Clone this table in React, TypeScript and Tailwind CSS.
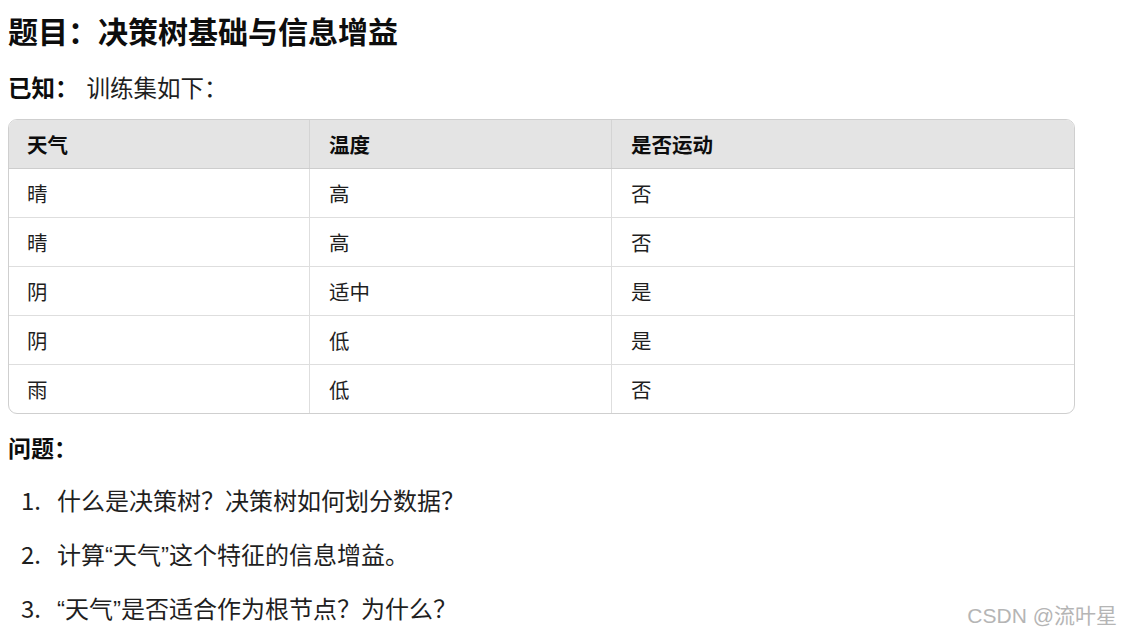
const rows = [
  ["晴", "高", "否"],
  ["晴", "高", "否"],
  ["阴", "适中", "是"],
  ["阴", "低", "是"],
  ["雨", "低", "否"],
];

// narrow latin quotes, like the reference font renders them
const Q = ({ c }: { c: string }) => (
  <span style={{ fontFamily: '"Liberation Sans", sans-serif' }}>{c}</span>
);

const questions = [
  <>什么是决策树？决策树如何划分数据？</>,
  <>
    计算<Q c="“" />天气<Q c="”" />这个特征的信息增益。
  </>,
  <>
    <Q c="“" />天气<Q c="”" />是否适合作为根节点？为什么？
  </>,
];

const App = () => {
  return (
    <div
      className="relative w-[1122px] h-[636px] overflow-hidden bg-white text-[#1f1f1f]"
      style={{ fontFamily: '"Noto Sans CJK SC", "Noto Sans", sans-serif' }}
    >
      <div className="pl-[8px] pr-[47px]">
        <h1 className="mt-[8px] h-[44px] leading-[44px] text-[30px] font-bold text-[#0d0d0d]">
          题目：决策树基础与信息增益
        </h1>

        <p className="mt-[18px] h-[34px] leading-[34px] text-[23.5px]">
          <span className="font-bold text-[#0d0d0d]">已知：</span>
          <span className="ml-[8px]">训练集如下：</span>
        </p>

        {/* table */}
        <div className="mt-[15px] w-[1067px] border border-[#cfcfcf] rounded-[9px] overflow-hidden text-[20.5px]">
          <div className="grid grid-cols-[300px_302px_1fr] h-[49px] bg-[#e4e4e4] border-b border-[#cdcdcd] font-bold text-[#0d0d0d]">
            <div className="flex items-center pl-[18px]">天气</div>
            <div className="flex items-center pl-[19px] border-l border-[#d4d4d4]">温度</div>
            <div className="flex items-center pl-[19px] border-l border-[#d4d4d4]">是否运动</div>
          </div>
          {rows.map((r, i) => (
            <div
              key={i}
              className={
                i < rows.length - 1
                  ? "grid grid-cols-[300px_302px_1fr] h-[49px] border-b border-[#dedede]"
                  : "grid grid-cols-[300px_302px_1fr] h-[48px]"
              }
            >
              <div className="flex items-center pl-[18px]">{r[0]}</div>
              <div className="flex items-center pl-[19px] border-l border-[#dedede]">{r[1]}</div>
              <div className="flex items-center pl-[19px] border-l border-[#dedede]">{r[2]}</div>
            </div>
          ))}
        </div>

        <p className="mt-[16px] h-[34px] leading-[34px] text-[23px] font-bold text-[#0d0d0d]">
          问题：
        </p>

        <ol className="mt-[19px] flex flex-col gap-[20px] text-[24px]">
          {questions.map((q, i) => (
            <li key={i} className="flex h-[34px] leading-[34px]">
              <span className="w-[49px] pl-[13px]">{i + 1}.</span>
              <span>{q}</span>
            </li>
          ))}
        </ol>
      </div>

      {/* watermark */}
      <div
        className="absolute right-[5px] top-[603px] text-[21px] leading-[26px] text-[#b5b5b5] [text-shadow:1px_1px_1px_#ffffff]"
        style={{ fontFamily: '"Liberation Sans", "Noto Sans CJK SC", sans-serif' }}
      >
        CSDN @流叶星
      </div>
    </div>
  );
};

export default App;
